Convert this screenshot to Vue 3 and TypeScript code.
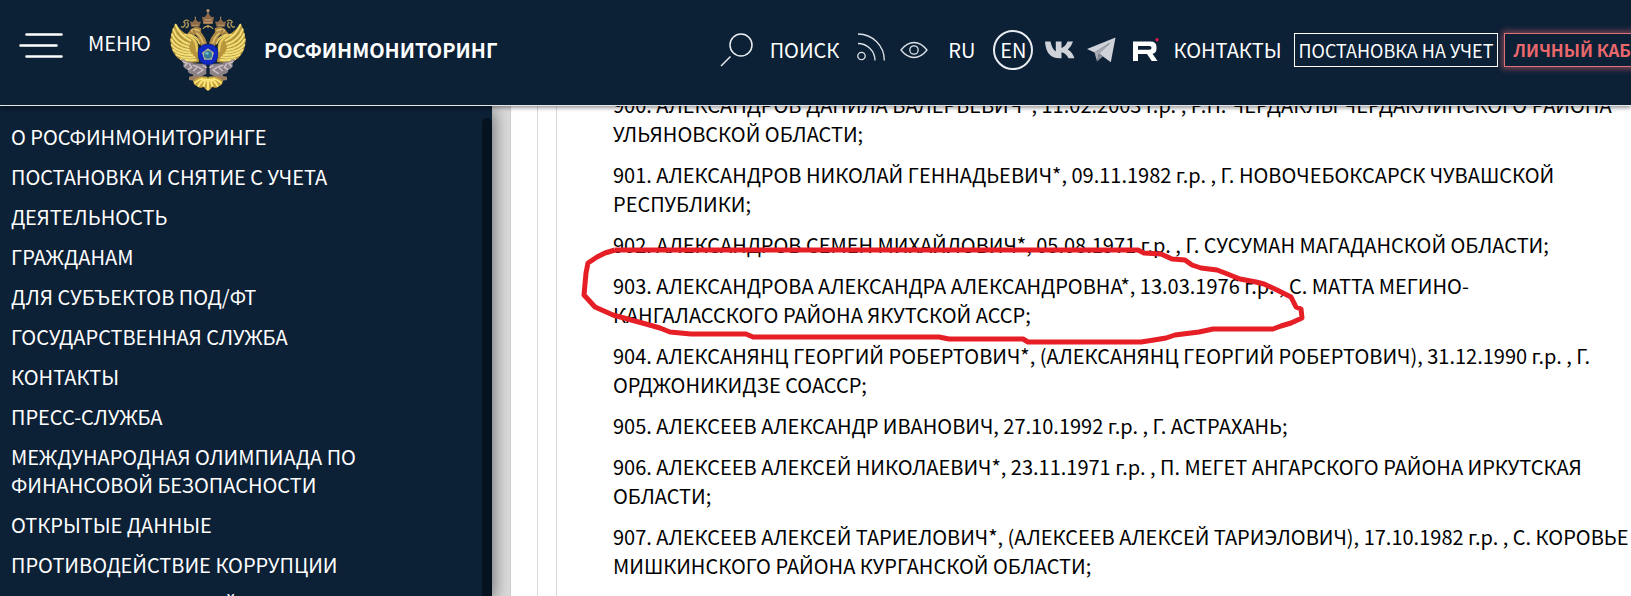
<script setup lang="ts">
interface Person {
  id: number
  text: string
  marked?: boolean
}

const menu: string[] = [
  'О РОСФИНМОНИТОРИНГЕ',
  'ПОСТАНОВКА И СНЯТИЕ С УЧЕТА',
  'ДЕЯТЕЛЬНОСТЬ',
  'ГРАЖДАНАМ',
  'ДЛЯ СУБЪЕКТОВ ПОД/ФТ',
  'ГОСУДАРСТВЕННАЯ СЛУЖБА',
  'КОНТАКТЫ',
  'ПРЕСС-СЛУЖБА',
  'МЕЖДУНАРОДНАЯ ОЛИМПИАДА ПО ФИНАНСОВОЙ БЕЗОПАСНОСТИ',
  'ОТКРЫТЫЕ ДАННЫЕ',
  'ПРОТИВОДЕЙСТВИЕ КОРРУПЦИИ',
  'МЕЖВЕДОМСТВЕННЫЙ СОВЕТ',
]

const people: Person[] = [
  { id: 900, text: 'АЛЕКСАНДРОВ ДАНИЛА ВАЛЕРЬЕВИЧ*, 11.02.2003 г.р. , Р.П. ЧЕРДАКЛЫ ЧЕРДАКЛИНСКОГО РАЙОНА УЛЬЯНОВСКОЙ ОБЛАСТИ;' },
  { id: 901, text: 'АЛЕКСАНДРОВ НИКОЛАЙ ГЕННАДЬЕВИЧ*, 09.11.1982 г.р. , Г. НОВОЧЕБОКСАРСК ЧУВАШСКОЙ РЕСПУБЛИКИ;' },
  { id: 902, text: 'АЛЕКСАНДРОВ СЕМЕН МИХАЙЛОВИЧ*, 05.08.1971 г.р. , Г. СУСУМАН МАГАДАНСКОЙ ОБЛАСТИ;' },
  { id: 903, text: 'АЛЕКСАНДРОВА АЛЕКСАНДРА АЛЕКСАНДРОВНА*, 13.03.1976 г.р. , С. МАТТА МЕГИНО-КАНГАЛАССКОГО РАЙОНА ЯКУТСКОЙ АССР;', marked: true },
  { id: 904, text: 'АЛЕКСАНЯНЦ ГЕОРГИЙ РОБЕРТОВИЧ*, (АЛЕКСАНЯНЦ ГЕОРГИЙ РОБЕРТОВИЧ), 31.12.1990 г.р. , Г. ОРДЖОНИКИДЗЕ СОАССР;' },
  { id: 905, text: 'АЛЕКСЕЕВ АЛЕКСАНДР ИВАНОВИЧ, 27.10.1992 г.р. , Г. АСТРАХАНЬ;' },
  { id: 906, text: 'АЛЕКСЕЕВ АЛЕКСЕЙ НИКОЛАЕВИЧ*, 23.11.1971 г.р. , П. МЕГЕТ АНГАРСКОГО РАЙОНА ИРКУТСКАЯ ОБЛАСТИ;' },
  { id: 907, text: 'АЛЕКСЕЕВ АЛЕКСЕЙ ТАРИЕЛОВИЧ*, (АЛЕКСЕЕВ АЛЕКСЕЙ ТАРИЭЛОВИЧ), 17.10.1982 г.р. , С. КОРОВЬЕ МИШКИНСКОГО РАЙОНА КУРГАНСКОЙ ОБЛАСТИ;' },
  { id: 908, text: 'АЛЕКСЕЕВ АНДРЕЙ ВЛАДИМИРОВИЧ*;' },
]
</script>

<template>
  <div class="page">
    <header class="header">
      <button class="menu-button" type="button">
        <svg width="44" height="26" viewBox="0 0 44 26" aria-hidden="true">
          <path d="M7.500 1.500H42.500M1.500 12.500H37.500M7.500 23.500H42.500" fill="none" stroke="#fff" stroke-width="2.600" stroke-linecap="round" />
        </svg>
        <span>МЕНЮ</span>
      </button>

      <a class="brand" href="#">
        <svg class="emblem" viewBox="28 22 234 252" aria-hidden="true">
          <defs>
            <g id="eagle-half">
              <path d="M47 69Q62 88 78 100L104 112Q118 122 116 150L118 184Q88 190 66 180Q36 166 32 122Q34 92 47 69Z" fill="#b8963c" />
              <g fill="none" stroke="#f3df78" stroke-width="6" stroke-linecap="round">
                <path d="M48 72Q60 104 92 120" />
                <path d="M41 86Q52 118 88 130" />
                <path d="M37 101Q48 130 86 139" />
                <path d="M35 117Q48 142 88 148" />
                <path d="M36 133Q50 153 92 156" />
                <path d="M41 148Q60 164 98 163" />
                <path d="M50 162Q70 174 104 170" />
                <path d="M64 175Q82 182 108 177" />
              </g>
              <path d="M76 102Q96 106 106 122Q112 134 112 150M88 100Q112 108 120 128" fill="none" stroke="#e6cc60" stroke-width="7" stroke-linecap="round" />
              <path d="M142 128Q138 112 128 100Q120 92 126 84Q116 76 104 80Q92 84 88 94L82 100L94 98Q98 104 108 102Q116 108 118 122L126 140Z" fill="#b08a44" />
              <path d="M96 90Q106 84 118 90M112 98Q124 106 130 126" fill="none" stroke="#dcc070" stroke-width="5" stroke-linecap="round" />
              <circle cx="102" cy="89" r="2" fill="#4a3418" />
              <path d="M94 78L91 62Q100 66 102 60L107 54L112 60Q116 66 124 62L119 78Z" fill="#8f6a4a" />
              <path d="M97 74H116M107 56V48" stroke="#c19a68" stroke-width="3" fill="none" />
              <path d="M88 62Q78 54 72 64Q82 70 70 80L64 78M82 64Q92 76 78 82" fill="none" stroke="#b39a58" stroke-width="4" />
              <path d="M64 176Q76 174 82 184Q94 180 100 188L140 190V220L122 228Q104 234 98 220Q86 222 84 208Q66 200 72 190Z" fill="#8d8288" />
              <g fill="none" stroke="#cfc5c8" stroke-width="4" stroke-linecap="round">
                <path d="M70 182L82 188L76 196M88 188L96 200L86 206M100 194L114 198L102 210M118 200L130 208L114 218M130 196L140 200" />
              </g>
              <path d="M88 228Q110 222 138 228L132 240Q108 242 88 238Z" fill="#9b7f62" />
              <path d="M100 240Q118 226 144 228V270Q136 266 132 258Q118 266 114 256Q102 256 100 240Z" fill="#c7a13e" />
              <path d="M106 246Q116 238 128 234M116 256Q122 244 134 236M132 256Q134 246 140 236" fill="none" stroke="#fbe678" stroke-width="6" stroke-linecap="round" />
            </g>
          </defs>
          <use href="#eagle-half" />
          <use href="#eagle-half" transform="translate(290 0) scale(-1 1)" />
          <path d="M131 70L127 48Q138 52 139 44L145 36L151 44Q152 52 163 48L159 70Z" fill="#8f6a4a" />
          <path d="M132 66H158M135 58H155" stroke="#c09468" stroke-width="4" />
          <path d="M145 38V25M140 30H150" stroke="#c7a37a" stroke-width="4" />
          <path d="M130 84Q145 68 160 84M145 72V82" stroke="#b39a58" stroke-width="4" fill="none" />
          <path d="M129 133Q145 128 161 133L174 146V170Q170 184 158 189Q145 194 132 189Q120 184 116 170V146Z" fill="#1028c4" stroke="#0a1c90" stroke-width="2" />
          <path d="M145 143L163 156L156 177H134L127 156Z" fill="#b9b890" />
          <circle cx="145" cy="162" r="12" fill="#2f7898" />
          <circle cx="142" cy="158" r="5" fill="#72b4c4" />
          <path d="M145 236V266" stroke="#fbe678" stroke-width="7" stroke-linecap="round" />
        </svg>
        <strong>РОСФИНМОНИТОРИНГ</strong>
      </a>

      <nav class="tools">
        <a class="search" href="#">
          <svg width="34" height="34" viewBox="0 0 34 34" aria-hidden="true">
            <g fill="none" stroke="#e9edf1" stroke-width="1.500"><circle cx="21" cy="12" r="11" /><path d="M10.500 23.500L1 33" /></g>
          </svg>
          <span>ПОИСК</span>
        </a>
        <a class="rss" href="#" aria-label="RSS">
          <svg width="28" height="28" viewBox="0 0 28 28" aria-hidden="true">
            <g fill="none" stroke="#dde3e8" stroke-width="1.300"><circle cx="4.500" cy="23" r="3.700" /><path d="M1 10.500A17 17 0 0 1 18 27.500M1 1A26.300 26.300 0 0 1 27.300 27.500" /></g>
          </svg>
        </a>
        <a class="eye" href="#" aria-label="Версия для слабовидящих">
          <svg width="28" height="18" viewBox="0 0 28 18" aria-hidden="true">
            <g fill="none" stroke="#dde3e8" stroke-width="1.300"><path d="M1 9Q7 1.500 14 1.500T27 9Q21 16.500 14 16.500T1 9Z" /><circle cx="14" cy="9" r="4.200" /></g>
          </svg>
        </a>
        <a class="lang" href="#">RU</a>
        <a class="lang current" href="#">EN</a>
        <a class="vk" href="#" aria-label="VK">
          <svg width="30" height="18" viewBox="0 0 30 18" aria-hidden="true">
            <path d="M0 .5H5.500Q7 8 10.800 10.500V.5H16.500V7Q20.500 5.500 22.500 .5H28Q26.500 5.500 22.800 8.500Q27.500 11.200 29.500 17.300H23.500Q21.500 12.500 16.500 11.200V17.300H14.500Q1 17.300 0 .5Z" fill="#cfd2d8" />
          </svg>
        </a>
        <a class="telegram" href="#" aria-label="Telegram">
          <svg width="29" height="26" viewBox="0 0 29 26" aria-hidden="true">
            <path d="M28.500 .5L0 12L7.500 15.500L23.500 5.500L12 16.500L23.800 25.200Z" fill="#cfd2d8" />
            <path d="M7.500 15.500L23.500 5.500L12 16.500L10 24.500Z" fill="#a9adb5" />
            <path d="M10 24.500L12 16.500L16 19.500Z" fill="#858b96" />
          </svg>
        </a>
        <a class="rutube" href="#" aria-label="Rutube">
          <svg width="27" height="24" viewBox="0 0 27 24" aria-hidden="true">
            <path d="M0 3.500H17.500Q23.500 3.500 23.500 9V10.500Q23.500 15 19.500 15.800L24.500 23H18.700L14 16H5V23H0ZM5 8V11.700H16.500Q18.500 11.700 18.500 10V9.700Q18.500 8 16.500 8Z" fill="#fff" fill-rule="evenodd" />
            <circle cx="24" cy="1.800" r="1.700" fill="#d81e48" />
          </svg>
        </a>
        <a class="contacts" href="#">КОНТАКТЫ</a>
        <a class="boxed" href="#">ПОСТАНОВКА НА УЧЕТ</a>
        <a class="boxed cabinet" href="#">ЛИЧНЫЙ КАБИНЕТ</a>
      </nav>
    </header>

    <div class="body">
      <aside class="sidebar">
        <nav>
          <ul class="menu">
            <li v-for="item in menu" :key="item"><a href="#">{{ item }}</a></li>
          </ul>
        </nav>
        <div class="scrollbar" />
      </aside>

      <main class="content">
        <div class="frame">
          <div class="people">
            <p v-for="p in people" :key="p.id">
              {{ p.id }}. {{ p.text }}
              <svg v-if="p.marked" class="mark" viewBox="580 244 730 104" aria-hidden="true">
                <path
                  d="M615 250H1138L1144 253L1161 254L1172 259L1185 260L1192 265L1201 268L1217 270L1225 273L1240 279L1256 282L1264 284L1277 290L1291 297L1296 307L1301 309L1302 318L1291 323L1281 326L1273 329H1213L1199 332L1175 335L1166 338L1154 340L1141 342H1028L1023 339H949L939 337H753L746 334H691L670 332L660 328L646 324L613 315L595 307L584 295L586 273L588 263L597 257L605 253L615 250"
                  fill="none" stroke="#e61e25" stroke-width="5" stroke-linejoin="round" />
              </svg>
            </p>
          </div>
        </div>
      </main>
    </div>
  </div>
</template>

<style>
body {
  margin: 0;
  overflow: hidden;
}
</style>

<style scoped>
.page {
  display: flex;
  flex-direction: column;
  height: 100vh;
  overflow: hidden;
  background: #fff;
  color: #000;
  font-family: "Noto Sans CJK SC", "Noto Sans", sans-serif;
  font-size: 20px;
  line-height: 28px;
}

a {
  color: inherit;
  text-decoration: none;
}

svg {
  display: block;
}

.header {
  position: relative;
  z-index: 2;
  display: flex;
  flex: none;
  height: 105px;
  border-bottom: 1px solid #e4e6ea;
  background: #0c2036;
  box-shadow: 0 2px 4px rgba(0, 0, 0, 0.4);
  color: #fff;
  white-space: nowrap;
}

.menu-button {
  display: flex;
  flex: none;
  gap: 25px;
  align-items: center;
  align-self: flex-start;
  margin-top: 27px;
  padding: 0 0 0 19px;
  border: 0;
  background: none;
  color: inherit;
  font: inherit;
}

.menu-button svg {
  margin-top: 6px;
}

.brand {
  display: flex;
  flex: none;
  gap: 17px;
  align-items: center;
  align-self: flex-start;
  margin: 8px 0 0 18px;
}

.emblem {
  width: 78px;
  height: 84px;
}

.tools {
  display: flex;
  flex: none;
  align-items: center;
  height: 99px;
  margin-left: 222px;
}

.search {
  display: flex;
  gap: 16px;
  align-items: center;
}

.rss {
  margin: 0 15px 6px 18px;
}

.lang {
  margin-left: 20px;
}

.lang.current {
  box-sizing: border-box;
  width: 40px;
  margin-left: 18px;
  padding: 4px 0;
  border: 2px solid #e9edf1;
  border-radius: 50%;
  text-align: center;
}

.vk {
  margin-left: 12px;
}

.telegram {
  margin-left: 12px;
}

.rutube {
  margin-left: 17px;
}

.contacts {
  margin-left: 13px;
}

.boxed {
  margin-left: 12px;
  padding: 2px 4px;
  border: 1px solid #fff;
  font-size: 18px;
}

.boxed.cabinet {
  margin-left: 6px;
  padding: 2px 8px;
  border-color: #e0707a;
  box-shadow: 0 0 6px 2px rgba(232, 104, 112, 0.5);
  color: #ea686c;
  font-size: 17px;
  font-weight: 700;
}

.body {
  display: flex;
  flex: 1;
  min-height: 0;
}

.sidebar {
  position: relative;
  z-index: 1;
  display: flex;
  flex: none;
  justify-content: space-between;
  width: 492px;
  background: #0c2036;
  box-shadow: 2px 4px 16px rgba(0, 0, 0, 0.5);
  color: #fff;
}

.menu {
  margin: 0;
  padding: 11px 0 0 11px;
  list-style: none;
}

.menu li {
  max-width: 380px;
  padding: 6px 0;
}

.scrollbar {
  flex: none;
  width: 10px;
  margin-top: 12px;
  border-radius: 5px 5px 0 0;
  background: #06121f;
}

.content {
  flex: 1;
  min-width: 0;
  padding-left: 18px;
  background: #dcdcdc;
}

.frame {
  display: flex;
  min-height: 100%;
  padding-left: 26px;
  border-left: 1px solid #cfcfcf;
  background: #fff;
}

.people {
  flex: 1;
  min-width: 0;
  margin-top: -16px;
  padding: 0 0 0 56px;
  border-left: 1px solid #dadada;
  line-height: 29px;
}

.frame::before {
  width: 18px;
  border-left: 1px solid #dadada;
  content: "";
}

.people p {
  position: relative;
  margin: 0 0 12px;
}

.mark {
  position: absolute;
  top: -27px;
  left: -33px;
  width: 730px;
  height: 104px;
}
</style>
